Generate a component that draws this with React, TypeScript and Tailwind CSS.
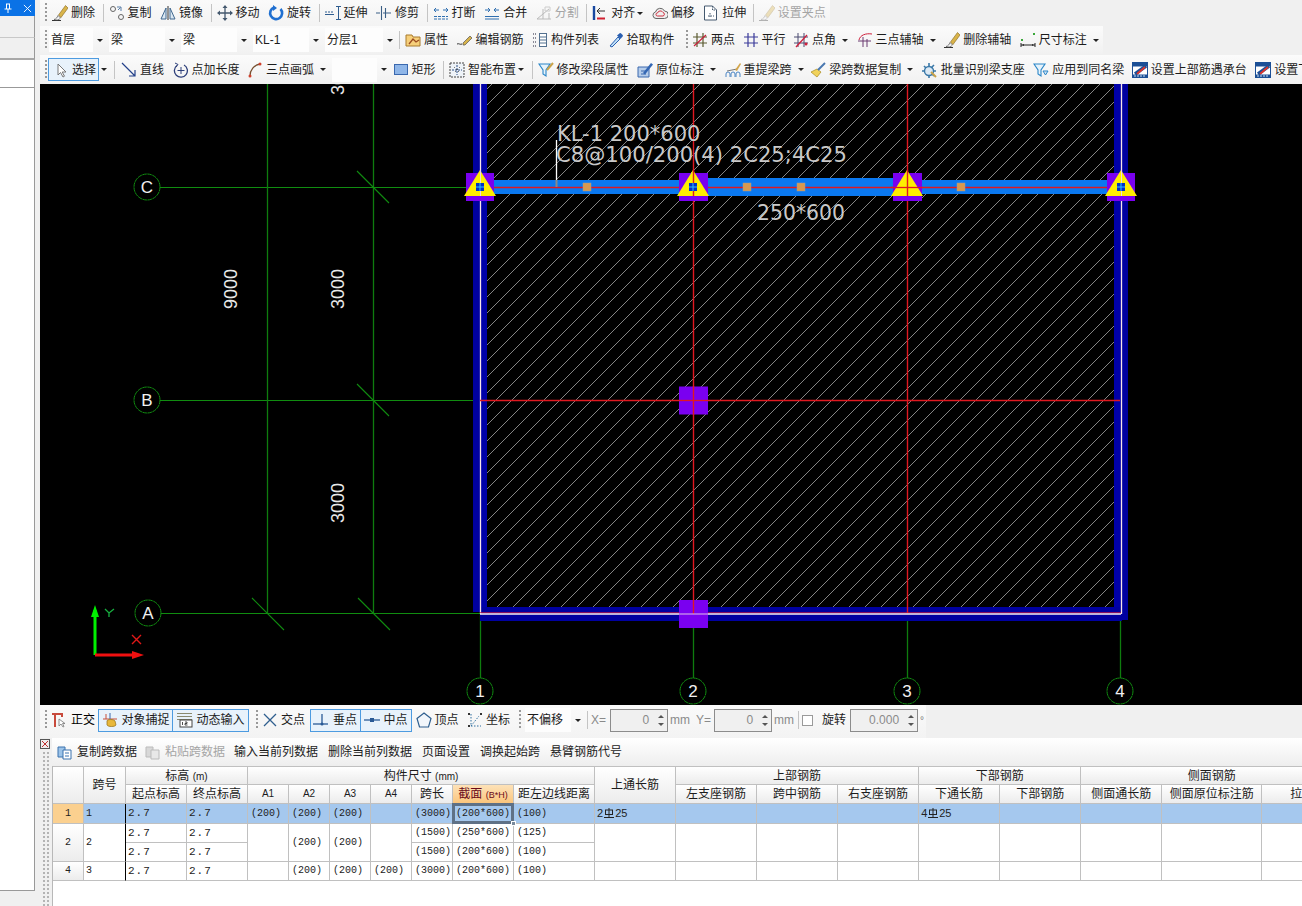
import React from "react";

const S = ({ children }: { children: React.ReactNode }) => (
  <svg viewBox="0 0 16 16" className="w-4 h-4 shrink-0 block" fill="none">{children}</svg>
);

const Brush = ({ gray }: { gray?: boolean }) => (
  <S>
    <g opacity={gray ? 0.35 : 1}>
      <path d="M0 15.500h9" stroke="#333" />
      <path d="M2 14.500c2.500-.5 3-2 4-4l2.500 2.500C7 15 4.500 15.500 2 14.500Z" fill="#f4f4f4" stroke="#555" strokeWidth=".7" />
      <path d="M6.500 10 13.500 .5 16 3 9 12.500Z" fill="#d9b44a" stroke="#85651d" strokeWidth=".6" />
    </g>
  </S>
);
const Hash = ({ c = "#3b3b8f", red }: { c?: string; red?: boolean }) => (
  <S>
    <path d="M5 1v14M11 1v14M1 5h14M1 11h14" stroke={c} strokeWidth="1.200" />
    {red && <path d="M2 14 14 3" stroke="#c8203c" strokeWidth="1.200" />}
  </S>
);
const Zed = () => (
  <S>
    <rect x=".5" y=".5" width="15" height="15" fill="#fff" stroke="#1b4f96" />
    <path d="M1 1h14v3.500H1Z" fill="#1b4f96" />
    <path d="M14 4 3 12" stroke="#1b4f96" strokeWidth="3.500" />
    <path d="M13 5 5 12" stroke="#e0352b" strokeWidth="1.800" />
    <path d="M1 12.500h14V15H1Z" fill="#1b4f96" />
    <path d="M3 13v2M6 13v2M9 13v2M12 13v2" stroke="#cfe0f2" />
  </S>
);
const Funnel = ({ c = "#2a86c8", pen }: { c?: string; pen?: boolean }) => (
  <S>
    <path d="M1 2h11L8 8v6L5 12V8Z" fill="#e6f3fb" stroke={c} strokeWidth="1.100" />
    {pen ? <path d="M9 8 15 1" stroke="#c9a34a" strokeWidth="2" /> : <path d="M10 9h5l-2.500 4Z" fill="#cfe3f4" stroke={c} />}
  </S>
);

const icons: Record<string, React.ReactNode> = {
  brush: <Brush />,
  brushGray: <Brush gray />,
  copy: (
    <S>
      <circle cx="4" cy="4" r="2.500" stroke="#666" />
      <circle cx="12" cy="12" r="2.500" stroke="#666" />
      <path d="M8 2h4v4M11.500 2.500 9 5" stroke="#5b7fa8" />
    </S>
  ),
  mirror: (
    <S>
      <path d="M8 1v14" stroke="#333" />
      <path d="M6 3v11H1ZM10 3v11h5Z" fill="#dbe8f3" stroke="#40688f" />
    </S>
  ),
  move: (
    <S>
      <path d="M8 1v14M1 8h14" stroke="#44586e" strokeWidth="1.300" />
      <path d="M8 0 5.500 3h5ZM8 16l-2.500-3h5ZM0 8l3-2.500v5ZM16 8l-3-2.500v5Z" fill="#44586e" />
    </S>
  ),
  rotate: (
    <S>
      <path d="M12.500 4A6 6 0 1 1 6 2.500" stroke="#1f6fd0" strokeWidth="2.600" />
      <path d="M5 0v6l4-3Z" fill="#1f6fd0" />
    </S>
  ),
  extend: (
    <S>
      <path d="M13.500 1v14M11 1.500h5M11 14.500h5" stroke="#2f5c8f" />
      <path d="M0 7h2M3 7h2M6 7h2M0 9.500h9" stroke="#2f5c8f" />
    </S>
  ),
  trim: (
    <S>
      <path d="M5.500 1v14M9.500 3v10M0 8h4M7 8h8" stroke="#3b5f85" strokeWidth="1.100" />
    </S>
  ),
  breakI: (
    <S>
      <path d="M1 5h5M10 5h5M3 3 1 5l2 2M13 3l2 2-2 2" stroke="#2f6fb0" />
      <path d="M1 11.500h14M1 14h14" stroke="#2f6fb0" strokeDasharray="3 1" />
    </S>
  ),
  merge: (
    <S>
      <path d="M1 5h5M10 5h5M4 3l2 2-2 2M12 3l-2 2 2 2M1 11.500h14M1 14h14" stroke="#2f6fb0" />
    </S>
  ),
  split: (
    <S>
      <path d="M1 14 13 4M1 14h14M7 4v10M13 8v6" stroke="#bbb" />
      <path d="M9 2h5v4H9Z" stroke="#ccc" />
    </S>
  ),
  align: (
    <S>
      <path d="M2 1v14" stroke="#1848a0" strokeWidth="2.400" />
      <path d="M5 6h8M5 6l3-3M5 6l3 3" stroke="#333" />
      <path d="M5 13.500h8" stroke="#d02030" strokeWidth="2" />
    </S>
  ),
  offset: (
    <S>
      <path d="M4 13.500a3.300 3.300 0 0 1-.5-6.500 4.800 4.800 0 0 1 9-1 3.700 3.700 0 0 1 0 7.500Z" fill="#eee" stroke="#666" />
      <path d="M5.500 11a1.500 1.500 0 0 1 0-3 3 3 0 0 1 5.500-.5 1.800 1.800 0 0 1 0 3.500Z" stroke="#d03040" />
    </S>
  ),
  stretch: (
    <S>
      <path d="M1.500 1h8l4 4v10h-12Z" fill="#fff" stroke="#44586e" />
      <path d="M9.500 1v4h4M7 8v5M5 11h6" stroke="#44586e" strokeDasharray="1.500 1" />
    </S>
  ),
  folder: (
    <S>
      <path d="M1 3h6l1 2h7v9H1Z" fill="#f6cf7a" stroke="#a87b2c" />
      <path d="M4 12 8 7l3 3 3-2" stroke="#9a4a20" strokeWidth="1.300" />
    </S>
  ),
  pen: (
    <S>
      <path d="M0 12c2-1 3 1 5 0" stroke="#333" />
      <path d="M6 11 13 4l2 2-7 7H6Z" fill="#d7b34b" stroke="#555" strokeWidth=".7" />
    </S>
  ),
  list: (
    <S>
      <path d="M1 2h3M1 6h3M1 10h3M1 14h3" stroke="#667" strokeDasharray="1 1" strokeWidth="1.500" />
      <rect x="7.500" y="1.500" width="7" height="13" fill="#fff" stroke="#53708f" />
      <path d="M8 5h6M8 8h6M8 11h6" stroke="#53708f" />
    </S>
  ),
  dropper: (
    <S>
      <path d="M2 14 10 5l2 2-8 8Z" fill="#bfe0f8" stroke="#2a5fb0" />
      <path d="M9 3.500 12 1c1 0 3 2 3 3l-2.500 3Z" fill="#2a5fb0" />
    </S>
  ),
  hashA: <Hash c="#5a5a30" red />,
  hashB: <Hash c="#3b3b9a" />,
  hashC: (
    <S>
      <path d="M5 1v14M11 1v14M1 5h14M1 11h14" stroke="#4b4b70" />
      <path d="M3 15 14 3" stroke="#d0203c" strokeWidth="1.300" />
      <circle cx="13" cy="12" r="1.500" fill="#d0203c" />
    </S>
  ),
  hashD: (
    <S>
      <path d="M6 5v10M1 9h13M10 7v8" stroke="#6a3a70" />
      <path d="M2 8C3 3 9 1 15 2" stroke="#d0203c" />
    </S>
  ),
  dim: (
    <S>
      <path d="M1 11v4M15 11v4M1 13h14" stroke="#222" />
      <path d="M2 13 4 12v2ZM14 13l-2-1v2Z" fill="#222" />
      <rect x="1" y="7" width="2" height="2" fill="#3aa83a" />
      <rect x="13" y="1" width="2" height="2" fill="#3aa83a" />
    </S>
  ),
  cursor: (
    <S>
      <path d="M5 2v11l2.500-2.500L10 15l1.500-.8L9.200 10H13Z" fill="#fff" stroke="#777" />
    </S>
  ),
  line: (
    <S>
      <path d="M1 1 14 14M14 8v6H8" stroke="#23408a" strokeWidth="1.200" />
    </S>
  ),
  addLen: (
    <S>
      <path d="M4 3.500A6.500 6.500 0 1 0 11 3" stroke="#2d3f7a" strokeWidth="1.300" />
      <path d="M8 5v7M4.500 8.500h7M2 1l3 1.500L3 5" stroke="#2d3f7a" />
    </S>
  ),
  arc: (
    <S>
      <path d="M3 14C3 8 7 3 13 2" stroke="#775030" strokeWidth="1.300" />
      <circle cx="3" cy="14" r="1.500" fill="#d0402c" />
      <circle cx="13" cy="2" r="1.500" fill="#d0402c" />
    </S>
  ),
  rect: (
    <S>
      <rect x="1.500" y="2.500" width="13" height="10" fill="#8fb6e8" stroke="#3a68ae" />
    </S>
  ),
  smart: (
    <S>
      <rect x="1" y="1" width="14" height="14" fill="#eef3f8" stroke="#444" strokeDasharray="2 1" />
      <path d="M8 3v10M3 8h10" stroke="#2a4f88" strokeDasharray="2 1" />
      <path d="M5 5l6 6M11 5l-6 6" stroke="#444" strokeDasharray="1 2" />
    </S>
  ),
  funnelPen: <Funnel pen />,
  note: (
    <S>
      <path d="M1 5h11v10H1Z" fill="#b6cdea" stroke="#3a68ae" />
      <path d="M4 9h5M4 12h5" stroke="#3a68ae" />
      <path d="M6 11 14 1l2 1.500-8 10Z" fill="#3467b4" />
    </S>
  ),
  bridge: (
    <S>
      <path d="M1 15v-3a2 2 0 0 1 4 0v3M6 15v-3a2 2 0 0 1 4 0v3M11 15v-3a2 2 0 0 1 4 0v3" stroke="#4c86c4" />
      <path d="M2 9 12 7" stroke="#777" />
      <path d="M10 8 15 1l1 1-4 7Z" fill="#d3a64c" />
    </S>
  ),
  broom: (
    <S>
      <path d="M1 10 7 15l4-5-4-3Z" fill="#f1d25a" stroke="#a98a20" strokeWidth=".7" />
      <path d="M8 8 15 1" stroke="#4a78b0" strokeWidth="2" />
    </S>
  ),
  gear: (
    <S>
      <circle cx="7" cy="9" r="4.500" fill="#dce9f4" stroke="#3a78a8" strokeWidth="1.400" />
      <path d="M7 1v3M7 14v2M0 9h2M12 9h2M2 4l2 2M10 12l2 2M12 3 9 6" stroke="#3a78a8" strokeWidth="1.600" />
      <path d="M9 10l5 5" stroke="#c9a24a" strokeWidth="2" />
    </S>
  ),
  funnel: <Funnel />,
  zed: <Zed />,
  ortho: (
    <S>
      <path d="M1 2h10v3M4 2v13" stroke="#c84a3c" strokeWidth="2" />
      <path d="M8 7v7l2-2 2 3 1-.5-1.500-3H14Z" fill="#fff" stroke="#777" strokeWidth=".8" />
    </S>
  ),
  magnet: (
    <S>
      <path d="M1 7h14M4 2v5" stroke="#c8503c" />
      <path d="M8 1v6" stroke="#3a68ae" />
      <path d="M5 9c0-2 7-2 8 0l1 4c-1 2-8 2-9 0Z" fill="#e8b93c" stroke="#8f6b14" strokeWidth=".7" />
    </S>
  ),
  dyn: (
    <S>
      <path d="M0 1.500h15M0 4.500h15M0 7.500h15" stroke="#8a8a70" />
      <rect x="3" y="8" width="12" height="7" fill="#fff" stroke="#444" />
      <path d="M5.500 10v3M8 10h2v1.500H8V13h2.500" stroke="#222" strokeWidth=".8" />
    </S>
  ),
  cross: (
    <S>
      <path d="M2 2 14 14M14 2 2 14" stroke="#2f5f8f" strokeWidth="1.300" />
    </S>
  ),
  perp: (
    <S>
      <path d="M0 12h15" stroke="#2a5a96" strokeWidth="1.300" />
      <path d="M9 2v10" stroke="#2a5a96" strokeWidth="1.300" />
      <circle cx="9" cy="12" r="1.500" fill="#2a5a96" />
    </S>
  ),
  mid: (
    <S>
      <path d="M0 8h16" stroke="#2a5a96" strokeWidth="1.300" />
      <rect x="6" y="6" width="4" height="4" fill="#2a5a96" />
    </S>
  ),
  vertex: (
    <S>
      <path d="M8 1 15 6.500 12.500 15h-9L1 6.500Z" fill="#f2f6fb" stroke="#2f5f8f" strokeWidth="1.200" />
    </S>
  ),
  coord: (
    <S>
      <path d="M4 2v12h10M4 14 12 4" stroke="#2f6f9f" strokeDasharray="1.500 1.500" />
      <rect x="1" y="1" width="2" height="2" fill="#333" />
      <rect x="13" y="1" width="2" height="2" fill="#333" />
      <rect x="1" y="13" width="2" height="2" fill="#333" />
    </S>
  ),
  paste: (
    <S>
      <path d="M1 3h7v10H1Z" fill="#9cc3e8" stroke="#3a72ae" />
      <path d="M6 6h8v9H6Z" fill="#fff" stroke="#3a72ae" />
      <path d="M8 9h4M8 12h4" stroke="#3a72ae" />
    </S>
  ),
  pasteGray: (
    <S>
      <path d="M1 3h7v10H1Z" fill="#d8d8d8" stroke="#bbb" />
      <path d="M6 6h8v9H6Z" fill="#e8e8e8" stroke="#bbb" />
    </S>
  ),
};

const Arrow = ({ tight }: { tight?: boolean }) => (
  <span className={`${tight ? "ml-[2px]" : "ml-[6px]"} w-0 h-0 border-x-[3px] border-x-transparent border-t-[3px] border-t-[#222] shrink-0`} />
);

const Tool = ({ i, t, arrow, tight, gray, mr = "mr-[8.5px]" }: { i: string; t: string; arrow?: boolean; tight?: boolean; gray?: boolean; mr?: string }) => (
  <div className={`flex items-center shrink-0 ${mr}`}>
    {icons[i]}
    <span className={`ml-[3px] whitespace-nowrap ${gray ? "text-[#a5a5a5]" : "text-[#1c1c1c]"}`}>{t}</span>
    {arrow && <Arrow tight={tight} />}
  </div>
);

const Sep = () => <div className="w-px h-[18px] bg-[#c4c4c4] -ml-[1px] mr-[5px] shrink-0" />;
const Grip = () => (
  <div className="w-[2px] h-[20px] shrink-0 mr-[4px] bg-[linear-gradient(#999_50%,transparent_50%)] bg-[length:2px_4px]" />
);

const Select = ({ t, w }: { t: string; w: string }) => (
  <div className={`flex items-center shrink-0 h-[24px] ${w}`}>
    <div className="bg-[#fdfdfd] h-full flex-1 flex items-center pl-[2px] whitespace-nowrap text-[#1c1c1c]">{t}</div>
    <div className="w-[12px] flex justify-center mr-[4px]">
      <Arrow tight />
    </div>
  </div>
);

const Btn = ({ i, t, w }: { i: string; t: string; w: string }) => (
  <div className={`flex items-center justify-center h-[23px] border border-[#4d9be0] bg-[#e8f2fb] shrink-0 ${w}`}>
    {icons[i]}
    <span className="ml-[4px] whitespace-nowrap text-[#1c1c1c]">{t}</span>
  </div>
);

const Spin = ({ v, w }: { v: string; w: string }) => (
  <div className={`flex items-center h-[23px] border border-[#8c8c8c] bg-[#f0f0f0] shrink-0 text-[#8a8a8a] ${w}`}>
    <span className="flex-1 text-right pr-[5px]">{v}</span>
    <div className="w-[13px] flex flex-col items-center gap-[5px]">
      <span className="w-0 h-0 border-x-[3px] border-x-transparent border-b-[3px] border-b-[#555]" />
      <span className="w-0 h-0 border-x-[3px] border-x-transparent border-t-[3px] border-t-[#555]" />
    </div>
  </div>
);

const Rebar = ({ n }: { n: string }) => (
  <span className="inline-flex items-center font-['Liberation_Sans',sans-serif] text-[11px] -ml-[1px]">
    {n}
    <svg viewBox="0 0 10 12" className="w-[10px] h-[12px] ml-[1px] mr-[1px]" fill="none" stroke="#222" strokeWidth="1">
      <rect x="1.500" y="3" width="7" height="4.500" />
      <path d="M5 1v9.500M0 10.500h10" />
    </svg>
    25
  </span>
);

const G = "#108c10";
const R = "#e01820";

const Bubble = ({ x, y, t }: { x: number; y: number; t: string }) => (
  <g>
    <circle cx={x} cy={y} r="13" fill="#000" stroke={G} strokeDasharray="4.500 0.600" />
    <text x={x} y={y + 6} textAnchor="middle" fontSize="17" fill="#f0f0f0" fontFamily="'Liberation Sans',sans-serif">
      {t}
    </text>
  </g>
);

const Col = ({ x, y, w = 28 }: { x: number; y: number; w?: number }) => (
  <rect x={x - w / 2} y={y - 14} width={w} height="28" fill="#7a00f0" />
);

const Tri = ({ x, mark = true }: { x: number; mark?: boolean }) => (
  <g>
    <path d={`M${x} 170 L${x + 16} 196 H${x - 16} Z`} fill="#ffee00" />
    {mark && (
      <>
        <rect x={x - 4} y="183" width="8" height="8" fill="#0030c8" />
        <path d={`M${x} 183v8M${x - 4} 187h8`} stroke="#33c0ff" />
      </>
    )}
  </g>
);

const Dot = ({ x }: { x: number }) => <rect x={x - 4} y="183" width="8" height="8" fill="#d8994e" stroke="#9a9a9a" strokeWidth=".5" />;

const Canvas = () => (
  <svg viewBox="40 84 1262 621" className="w-[1262px] h-[621px] block bg-black shrink-0">
    <defs>
      <pattern id="h" patternUnits="userSpaceOnUse" width="16" height="16">
        <path d="M-2 18 18 -2" stroke="#bdbdbd" strokeWidth="0.700" />
      </pattern>
    </defs>
    <rect x="487" y="84" width="627" height="523" fill="url(#h)" />
    <path d="M160 187.500H480M160 400.500H480M160 613.500H480" stroke={G} strokeWidth="1.200" />
    <path d="M267.500 84V613M373.500 84V613M480.500 614V678M693.500 628V678M907.500 614V678M1120.500 615V678" stroke="#0e7c0e" strokeWidth="1.300" />
    <path d="M357 171 389 203M357 384 389 416M252 598 284 630M358 598 390 630" stroke={G} strokeWidth="1.100" />
    <rect x="473" y="84" width="8" height="528" fill="#0000a0" />
    <rect x="480" y="84" width="7" height="530" fill="#0000a8" />
    <rect x="1114" y="84" width="8" height="530" fill="#0000a8" />
    <rect x="1121" y="84" width="7" height="536" fill="#0000a0" />
    <rect x="480" y="607" width="642" height="14" fill="#0000a0" />
    <path d="M480.500 84V614M1121.500 84V614" stroke="#f8e4e8" strokeWidth="1.300" />
    <path d="M480 612.800H1121" stroke="#c01840" strokeWidth="1" />
    <path d="M480 614H1121" stroke="#f8f0f0" strokeWidth="1.300" />
    <rect x="480" y="180" width="640" height="14" fill="#0a78f0" />
    <rect x="693" y="178" width="214" height="18" fill="#0a78f0" />
    <path d="M480 187.500H1120M480 400.500H1120" stroke={R} strokeWidth="1.300" />
    <path d="M693.500 84V613M907.500 84V613" stroke={R} strokeWidth="1.400" />
    <Dot x={587} />
    <Dot x={747} />
    <Dot x={801} />
    <Dot x={961} />
    <path d="M556.500 140V180" stroke="#fff" strokeWidth="1.300" />
    <path d="M556.500 180V187" stroke="#888" strokeWidth="2" />
    <Col x={480} y={187} />
    <Col x={693.500} y={187} w={29} />
    <Col x={907.500} y={187} w={29} />
    <Col x={1121} y={187} />
    <Col x={693.500} y={400.500} w={29} />
    <Col x={693.500} y={614} w={29} />
    <path d="M693.500 386V415M693.500 600V614" stroke={R} strokeWidth="1.400" />
    <path d="M679 400.500H708" stroke={R} strokeWidth="1.300" />
    <path d="M679 614H708" stroke="#e0c0e8" />
    <Tri x={480} />
    <Tri x={693} />
    <Tri x={907} mark={false} />
    <Tri x={1121} />
    <path d="M693.500 170V183M693.500 191V196M907.500 170V196" stroke={R} strokeWidth="1.400" />
    <path d="M891 187.500H923" stroke={R} strokeWidth="1.300" />
    <path d="M480.500 170V183M480.500 191V196M1121.500 170V183M1121.500 191V196" stroke="#f4d8e0" />
    <g fontFamily="'DejaVu Sans',sans-serif" fill="#c9c9c9" fontSize="21">
      <text x="557" y="141">KL-1 200*600</text>
      <text x="556" y="162" textLength="291" lengthAdjust="spacingAndGlyphs">C8@100/200(4) 2C25;4C25</text>
      <text x="757" y="220" textLength="88" lengthAdjust="spacingAndGlyphs">250*600</text>
    </g>
    <g fontFamily="'Liberation Sans',sans-serif" fill="#e8e8e8" fontSize="18" textAnchor="middle">
      <text transform="translate(237 289) rotate(-90)">9000</text>
      <text transform="translate(344 289) rotate(-90)">3000</text>
      <text transform="translate(344 503) rotate(-90)">3000</text>
      <text transform="translate(344 75) rotate(-90)">3000</text>
    </g>
    <Bubble x={147} y={187} t="C" />
    <Bubble x={147} y={400} t="B" />
    <Bubble x={148} y={613} t="A" />
    <Bubble x={480} y={691} t="1" />
    <Bubble x={693} y={691} t="2" />
    <Bubble x={907} y={691} t="3" />
    <Bubble x={1120} y={691} t="4" />
    <path d="M95 655V610" stroke="#00f000" strokeWidth="3" />
    <path d="M95 605 91 617H99Z" fill="#00f000" />
    <path d="M95 655H136" stroke="#f01010" strokeWidth="3" />
    <path d="M144 655 132 651V659Z" fill="#f01010" />
    <path d="M105 609 109 613 114 609M109 613V617" stroke="#18b040" strokeWidth="1.300" fill="none" />
    <path d="M132 635 141 644M141 635 132 644" stroke="#e01818" strokeWidth="1.400" fill="none" />
  </svg>
);

const th = "border-r border-b border-[#c0c0c0] bg-linear-to-b from-white to-[#ececec] font-normal p-0 text-center text-[#1c1c1c] overflow-hidden whitespace-nowrap";
const td = "border-r border-b border-[#c0c0c0] p-0 pl-[3px] text-left align-middle font-['Liberation_Mono',monospace] text-[10px] text-[#222] whitespace-nowrap h-[19px]";
const num = "border-r border-b border-[#c0c0c0] p-0 pl-[2px] text-left font-['Liberation_Mono',monospace] text-[11px] tracking-[1px] text-[#222] h-[19px]";
const idx = "border-r border-b border-[#c0c0c0] p-0 text-center font-['Liberation_Mono',monospace] text-[10px] text-[#222] bg-linear-to-b from-white to-[#ececec]";
const sp = "border-r border-[#000] border-b-[#c0c0c0] border-b p-0 pl-[2px] text-left font-['Liberation_Mono',monospace] text-[10px] text-[#222]";
const blue = "bg-[#a5c8ee]";

const widths = ["w-[31px]", "w-[42px]", "w-[61px]", "w-[61px]", "w-[41px]", "w-[41px]", "w-[41px]", "w-[41px]", "w-[41px]", "w-[61px]", "w-[81px]", "w-[81px]", "w-[81px]", "w-[81px]", "w-[81px]", "w-[81px]", "w-[81px]", "w-[81px]", "w-[100px]", "w-[81px]"];

const Grid = () => (
  <table className="table-fixed border-separate border-spacing-0 w-[1290px] shrink-0 text-[12px] leading-none">
    <colgroup>
      {widths.map((w, i) => (
        <col key={i} className={w} />
      ))}
    </colgroup>
    <thead>
      <tr className="h-[19px]">
        <th rowSpan={2} className={`${th} border-t`} />
        <th rowSpan={2} className={`${th} border-t`}>跨号</th>
        <th colSpan={2} className={`${th} border-t`}>标高 <span className="text-[10px]">(m)</span></th>
        <th colSpan={7} className={`${th} border-t`}>构件尺寸 <span className="text-[10px]">(mm)</span></th>
        <th rowSpan={2} className={`${th} border-t`}>上通长筋</th>
        <th colSpan={3} className={`${th} border-t`}>上部钢筋</th>
        <th colSpan={2} className={`${th} border-t`}>下部钢筋</th>
        <th colSpan={3} className={`${th} border-t`}>侧面钢筋</th>
      </tr>
      <tr className="h-[19px]">
        <th className={th}>起点标高</th>
        <th className={th}>终点标高</th>
        <th className={`${th} text-[10px]`}>A1</th>
        <th className={`${th} text-[10px]`}>A2</th>
        <th className={`${th} text-[10px]`}>A3</th>
        <th className={`${th} text-[10px]`}>A4</th>
        <th className={th}>跨长</th>
        <th className="border-r border-b border-[#c0c0c0] bg-linear-to-b from-[#fde2b8] to-[#fbc57c] font-normal p-0 text-center text-[#6a0a1a] whitespace-nowrap">截面 <span className="text-[9px]">(B*H)</span></th>
        <th className={th}>距左边线距离</th>
        <th className={th}>左支座钢筋</th>
        <th className={th}>跨中钢筋</th>
        <th className={th}>右支座钢筋</th>
        <th className={th}>下通长筋</th>
        <th className={th}>下部钢筋</th>
        <th className={th}>侧面通长筋</th>
        <th className={th}>侧面原位标注筋</th>
        <th className={th}>拉筋</th>
      </tr>
    </thead>
    <tbody>
      <tr className="h-[20px]">
        <td className="border-r border-b border-[#c0c0c0] p-0 text-center font-['Liberation_Mono',monospace] text-[10px] text-[#222] bg-[#fbd08f]">1</td>
        <td className={`${sp} ${blue}`}>1</td>
        <td className={`${num} ${blue}`}>2.7</td>
        <td className={`${num} ${blue}`}>2.7</td>
        <td className={`${td} ${blue}`}>(200)</td>
        <td className={`${td} ${blue}`}>(200)</td>
        <td className={`${td} ${blue}`}>(200)</td>
        <td className={`${td} ${blue}`} />
        <td className={`${td} ${blue}`}>(3000)</td>
        <td className={`${td} ${blue} relative`}>
          (200*600)
          <div className="absolute -inset-[1px] border-[3px] border-[#5f7186] pointer-events-none" />
          <div className="absolute -right-[3px] -bottom-[3px] w-[5px] h-[5px] bg-[#7a8a9c] border border-white" />
        </td>
        <td className={`${td} ${blue}`}>(100)</td>
        <td className={`${td} ${blue}`}>
          <Rebar n="2" />
        </td>
        <td className={`${td} ${blue}`} />
        <td className={`${td} ${blue}`} />
        <td className={`${td} ${blue}`} />
        <td className={`${td} ${blue}`}>
          <Rebar n="4" />
        </td>
        <td className={`${td} ${blue}`} />
        <td className={`${td} ${blue}`} />
        <td className={`${td} ${blue}`} />
        <td className={`${td} ${blue}`} />
      </tr>
      <tr>
        <td rowSpan={2} className={idx}>2</td>
        <td rowSpan={2} className={sp}>2</td>
        <td className={num}>2.7</td>
        <td className={num}>2.7</td>
        <td rowSpan={2} className={td} />
        <td rowSpan={2} className={td}>(200)</td>
        <td rowSpan={2} className={td}>(200)</td>
        <td rowSpan={2} className={td} />
        <td className={td}>(1500)</td>
        <td className={td}>(250*600)</td>
        <td className={td}>(125)</td>
        <td rowSpan={2} className={td} />
        <td rowSpan={2} className={td} />
        <td rowSpan={2} className={td} />
        <td rowSpan={2} className={td} />
        <td rowSpan={2} className={td} />
        <td rowSpan={2} className={td} />
        <td rowSpan={2} className={td} />
        <td rowSpan={2} className={td} />
        <td rowSpan={2} className={td} />
      </tr>
      <tr>
        <td className={num}>2.7</td>
        <td className={num}>2.7</td>
        <td className={td}>(1500)</td>
        <td className={td}>(200*600)</td>
        <td className={td}>(100)</td>
      </tr>
      <tr>
        <td className={idx}>4</td>
        <td className={sp}>3</td>
        <td className={num}>2.7</td>
        <td className={num}>2.7</td>
        <td className={td} />
        <td className={td}>(200)</td>
        <td className={td}>(200)</td>
        <td className={td}>(200)</td>
        <td className={td}>(3000)</td>
        <td className={td}>(200*600)</td>
        <td className={td}>(100)</td>
        <td className={td} />
        <td className={td} />
        <td className={td} />
        <td className={td} />
        <td className={td} />
        <td className={td} />
        <td className={td} />
        <td className={td} />
        <td className={td} />
      </tr>
    </tbody>
  </table>
);

const bar = "flex items-center shrink-0 bg-linear-to-b from-[#fbfbfb] to-[#f1f1f1] pl-[5px] overflow-hidden";

export default function App() {
  return (
    <div className="flex w-[1302px] h-[906px] overflow-hidden bg-[#f0f0f0] text-[12px] font-['Liberation_Sans','Noto_Sans_CJK_SC',sans-serif]">
      <aside className="w-[35px] shrink-0 flex flex-col">
        <div className="h-[16px] bg-[#0a72e6] flex items-center justify-between px-[3px] shrink-0">
          <svg viewBox="0 0 10 10" className="w-[10px] h-[10px]" fill="none" stroke="#fff">
            <path d="M3 1h4M3.500 1v5M6.500 1v5M1.500 6h7M5 6v4" />
          </svg>
          <svg viewBox="0 0 10 10" className="w-[9px] h-[9px]" fill="none" stroke="#fff">
            <path d="M1 1 9 9M9 1 1 9" />
          </svg>
        </div>
        <div className="h-[22px] bg-[#f0f0f0] border-b border-[#c8c8c8] border-r border-r-[#999] shrink-0" />
        <div className="h-[22px] bg-[#f0f0f0] border-b-2 border-[#a8a8a8] border-r border-r-[#999] shrink-0" />
        <div className="h-[28px] bg-white border-b border-[#999] border-r border-r-[#999] shrink-0" />
        <div className="h-[803px] bg-white border-b border-[#999] border-r border-r-[#999] shrink-0" />
      </aside>
      <main className="flex-1 min-w-0 flex flex-col pl-[5px]">
        <div className="h-[26px] w-[790px] shrink-0 bg-linear-to-b from-[#fafafa] to-[#f3f3f3] flex items-center pl-[5px] overflow-hidden">
          <Grip />
          <div className="w-[1px] shrink-0" />
          <Tool i="brush" t="删除" />
          <Sep />
          <Tool i="copy" t="复制" />
          <Tool i="mirror" t="镜像" />
          <Sep />
          <Tool i="move" t="移动" />
          <Tool i="rotate" t="旋转" />
          <Sep />
          <Tool i="extend" t="延伸" />
          <Tool i="trim" t="修剪" />
          <Sep />
          <Tool i="breakI" t="打断" />
          <Tool i="merge" t="合并" />
          <Tool i="split" t="分割" gray />
          <Sep />
          <Tool i="align" t="对齐" arrow tight />
          <Tool i="offset" t="偏移" />
          <Tool i="stretch" t="拉伸" mr="mr-[7.5px]" />
          <Sep />
          <Tool i="brushGray" t="设置夹点" gray />
        </div>
        <div className={`h-[28px] w-[1063px] ${bar}`}>
          <Grip />
          <div className="-ml-[2px]" />
          <Select t="首层" w="w-[60px]" />
          <Select t="梁" w="w-[72px]" />
          <Select t="梁" w="w-[72px]" />
          <Select t="KL-1" w="w-[72px]" />
          <Select t="分层1" w="w-[74px]" />
          <div className="w-px h-[18px] bg-[#c4c4c4] mr-[5px] shrink-0" />
          <Tool i="folder" t="属性" />
          <Tool i="pen" t="编辑钢筋" />
          <Tool i="list" t="构件列表" />
          <Tool i="dropper" t="拾取构件" mr="mr-[11.5px]" />
          <Grip />
          <Tool i="hashA" t="两点" mr="mr-[7.5px]" />
          <Tool i="hashB" t="平行" mr="mr-[7.5px]" />
          <Tool i="hashC" t="点角" arrow />
          <Tool i="hashD" t="三点辅轴" arrow />
          <Tool i="brush" t="删除辅轴" />
          <Tool i="dim" t="尺寸标注" arrow />
        </div>
        <div className={`h-[29px] ${bar} mt-px`}>
          <div className="w-[2px] h-[20px] shrink-0 bg-[linear-gradient(#999_50%,transparent_50%)] bg-[length:2px_4px] mr-px" />
          <div className="flex items-center h-[23px] w-[51px] border border-[#4d9be0] bg-[#e8f2fb] shrink-0 pl-[4px]">
            {icons.cursor}
            <span className="ml-[3px] text-[#1c1c1c] whitespace-nowrap">选择</span>
          </div>
          <Arrow tight />
          <div className="w-px h-[18px] bg-[#c4c4c4] ml-[7px] mr-[6px] shrink-0" />
          <Tool i="line" t="直线" />
          <Tool i="addLen" t="点加长度" mr="mr-[7.5px]" />
          <Tool i="arc" t="三点画弧" arrow />
          <Select t="" w="w-[61px] -ml-[3px]" />
          <Tool i="rect" t="矩形" />
          <Sep />
          <Tool i="smart" t="智能布置" arrow tight />
          <Sep />
          <Tool i="funnelPen" t="修改梁段属性" />
          <Tool i="note" t="原位标注" arrow />
          <Tool i="bridge" t="重提梁跨" arrow mr="mr-[6.5px]" />
          <Tool i="broom" t="梁跨数据复制" arrow />
          <Tool i="gear" t="批量识别梁支座" />
          <Tool i="funnel" t="应用到同名梁" mr="mr-[7.5px]" />
          <Tool i="zed" t="设置上部筋遇承台" />
          <Tool i="zed" t="设置下部筋遇承台" />
        </div>
        <Canvas />
        <div className="h-[33px] shrink-0 flex items-center">
          <div className="h-full w-[886px] bg-linear-to-b from-[#fafafa] to-[#f3f3f3] flex items-center pl-[5px] pb-[3px] shrink-0">
            <Grip />
            <div className="flex items-center shrink-0 mr-[3px]">
              {icons.ortho}
              <span className="ml-[4px]">正交</span>
            </div>
            <Btn i="magnet" t="对象捕捉" w="w-[75px]" />
            <Btn i="dyn" t="动态输入" w="w-[77px] -ml-px" />
            <div className="w-[7px] shrink-0" />
            <Grip />
            <Tool i="cross" t="交点" />
            <div className="-ml-[4px]" />
            <Btn i="perp" t="垂点" w="w-[51px]" />
            <Btn i="mid" t="中点" w="w-[52px] -ml-px" />
            <div className="w-[4px] shrink-0" />
            <Tool i="vertex" t="顶点" />
            <Tool i="coord" t="坐标" mr="mr-[9px]" />
            <Grip />
            <Select t="不偏移" w="w-[62px]" />
            <div className="w-px h-[18px] bg-[#c4c4c4] mr-[3px] shrink-0" />
            <span className="text-[#8a8a8a] w-[19px] shrink-0">X=</span>
            <Spin v="0" w="w-[58px]" />
            <span className="text-[#8a8a8a] ml-[2px] w-[26px] shrink-0">mm</span>
            <span className="text-[#8a8a8a] w-[18px] shrink-0">Y=</span>
            <Spin v="0" w="w-[58px]" />
            <span className="text-[#8a8a8a] ml-[2px] w-[24px] shrink-0">mm</span>
            <div className="w-px h-[18px] bg-[#c4c4c4] mr-[3px] shrink-0" />
            <div className="w-[11px] h-[11px] border border-[#9a9a9a] bg-white mr-[9px] shrink-0" />
            <span className="text-[#1c1c1c] mr-[4px] shrink-0">旋转</span>
            <Spin v="0.000" w="w-[68px]" />
            <span className="text-[#777] ml-[2px] text-[10px] shrink-0">°</span>
          </div>
        </div>
        <div className="flex-1 min-h-0 flex bg-white">
          <div className="w-[12px] shrink-0 bg-[#f0f0f0] flex flex-col">
            <svg viewBox="0 0 10 10" className="w-[10px] h-[10px] mt-[1px] shrink-0" fill="none" stroke="#555">
              <rect x=".5" y=".5" width="9" height="9" fill="#eee" />
              <path d="M2 2 8 8M8 2 2 8" stroke="#c03030" />
            </svg>
            <div className="flex-1 mt-[2px] mx-[2px] bg-[radial-gradient(#b4b4b4_35%,transparent_40%)] bg-[length:4px_4px]" />
          </div>
          <div className="flex-1 min-w-0 flex flex-col">
            <div className="h-[28px] shrink-0 bg-linear-to-b from-white to-[#eeeeee] flex items-center pl-[5px] pb-[1px]">
              {icons.paste}
              <span className="ml-[4px] mr-[8px] text-[#1c1c1c]">复制跨数据</span>
              {icons.pasteGray}
              <span className="ml-[4px] mr-[9px] text-[#a5a5a5]">粘贴跨数据</span>
              <span className="mr-[10px] text-[#1c1c1c]">输入当前列数据</span>
              <span className="mr-[10px] text-[#1c1c1c]">删除当前列数据</span>
              <span className="mr-[10px] text-[#1c1c1c]">页面设置</span>
              <span className="mr-[10px] text-[#1c1c1c]">调换起始跨</span>
              <span className="text-[#1c1c1c]">悬臂钢筋代号</span>
            </div>
            <div className="flex-1 min-h-0 overflow-hidden border-l border-[#b8b8b8] flex items-start">
              <Grid />
            </div>
          </div>
        </div>
      </main>
    </div>
  );
}
